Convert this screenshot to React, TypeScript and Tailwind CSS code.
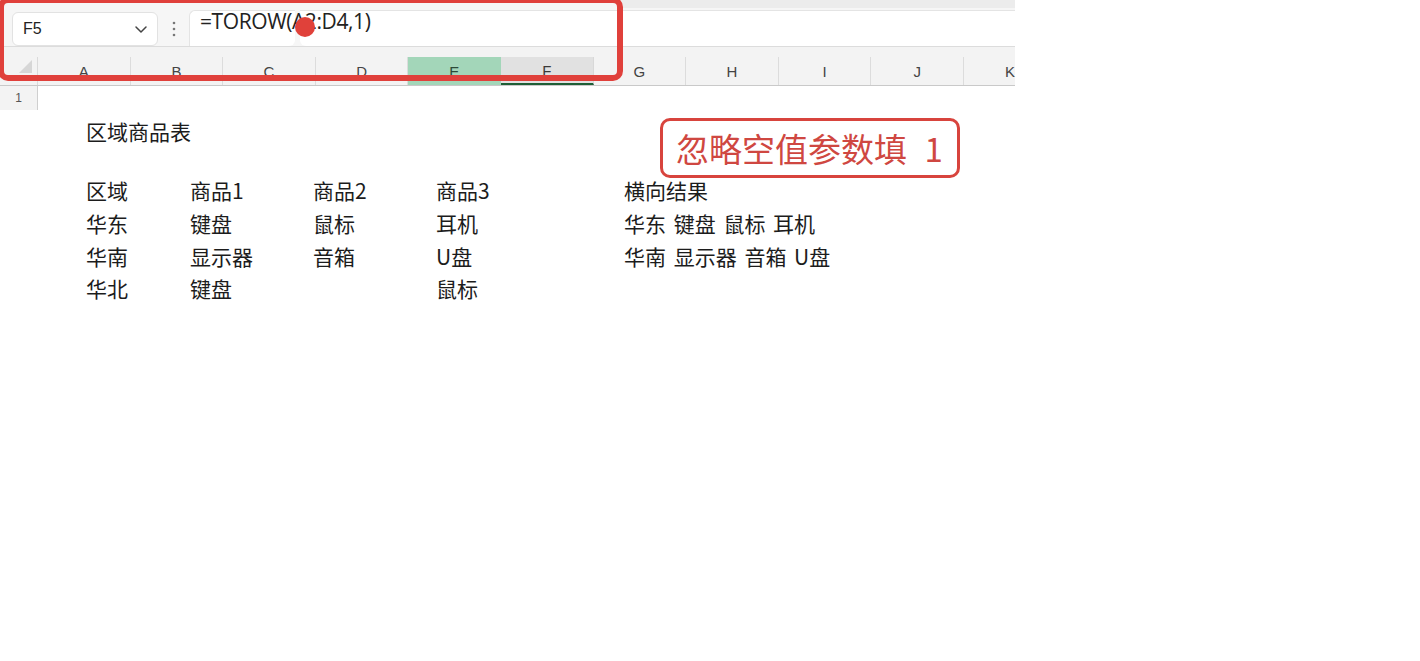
import React from "react";

const COLS = ["A", "B", "C", "D", "E", "F", "G", "H", "I", "J"];

const rows: string[][] = [
  ["区域", "商品1", "商品2", "商品3", "横向结果"],
  ["华东", "键盘", "鼠标", "耳机", "华东 键盘 鼠标 耳机"],
  ["华南", "显示器", "音箱", "U盘", "华南 显示器 音箱 U盘"],
  ["华北", "键盘", "", "鼠标", ""],
];

const rowHeights = ["h-[33px]", "h-[34px]", "h-[32px]", "h-[32px]"];

export default function App() {
  return (
    <div
      className="relative w-[1420px] h-[661px] bg-white overflow-hidden text-[#1c1c1c]"
      style={{ fontFamily: '"Noto Sans CJK SC", "Noto Sans", sans-serif' }}
    >
      <div className="w-[1015px] flex flex-col">
        {/* Toolbar / formula bar */}
        <div className="relative h-[47px] bg-[#f6f6f6] border-b border-[#dcdcdc] flex items-start">
          <div className="absolute left-[620px] top-0 right-0 h-[8px] bg-[#ececec]" />
          <div className="absolute left-[900px] top-[10px] right-0 h-px bg-[#cfcfcf]" />
          {/* Name box */}
          <div className="ml-[12px] mt-[12px] w-[146px] h-[34px] bg-white border border-[#e2e2e2] rounded-[6px] flex items-center justify-between pl-[10px] pr-[8px]">
            <span
              className="text-[16px] text-[#222]"
              style={{ fontFamily: '"Liberation Sans", Arial, sans-serif' }}
            >
              F5
            </span>
            <svg width="16" height="16" viewBox="0 0 16 16" fill="none">
              <path d="M3 6l5 5 5-5" stroke="#444" strokeWidth="1.5" strokeLinecap="round" strokeLinejoin="round" />
            </svg>
          </div>
          {/* dots */}
          <div className="w-[31px] h-[47px] flex items-center justify-center pt-[10px]">
            <svg width="4" height="16" viewBox="0 0 4 16">
              <circle cx="2" cy="2" r="1.3" fill="#777" />
              <circle cx="2" cy="8" r="1.3" fill="#777" />
              <circle cx="2" cy="14" r="1.3" fill="#777" />
            </svg>
          </div>
          {/* formula input */}
          <div className="relative flex-1 h-[47px] flex">
            <div className="mt-[10px] w-[106px] h-[36px] bg-white border-l border-t border-[#e4e4e4] rounded-tl-[6px] rounded-br-[6px]" />
            <div className="mt-[10px] ml-[5px] flex-1 h-[36px] bg-white border-t border-[#e4e4e4] rounded-bl-[6px]" />
            <div
              className="absolute left-[11px] top-[7px] text-[21px] leading-[28px] text-[#222] tracking-[-0.4px]"
              style={{ fontFamily: '"Open Sans", "Noto Sans", sans-serif' }}
            >
              =TOROW(A2:D4,1)
            </div>
            <div className="absolute left-[106px] top-[17px] w-[20px] h-[20px] rounded-full bg-[#e0413a]" />
          </div>
        </div>

        {/* Column header row */}
        <div className="h-[39px] bg-[#f3f3f3] border-b border-[#c9c9c9] flex items-end">
          <div className="w-[38px] h-[28px] relative border-r border-[#dadada]">
            <svg className="absolute left-[19px] top-[3px]" width="13" height="13" viewBox="0 0 13 13">
              <path d="M13 0L13 13L0 13Z" fill="#d6d6d6" />
            </svg>
          </div>
          {COLS.map((c) => (
            <div
              key={c}
              className={
                "w-[92.6px] h-[28px] flex items-center justify-center pt-[2px] text-[15px] border-r " +
                (c === "E"
                  ? "bg-[#a3d6b9] text-[#2c4a38] border-[#a3d6b9]"
                  : c === "F"
                  ? "bg-[#e1e1e1] text-[#3a3a3a] border-b-2 border-b-[#1e5e36] border-r-[#d8d8d8]"
                  : "text-[#444] border-[#dcdcdc]")
              }
              style={{ fontFamily: '"Liberation Sans", Arial, sans-serif' }}
            >
              {c}
            </div>
          ))}
          <div
            className="flex-1 h-[28px] flex items-center justify-end pt-[2px] text-[15px] text-[#444]"
            style={{ fontFamily: '"Liberation Sans", Arial, sans-serif' }}
          >
            K
          </div>
        </div>

        {/* Row 1 */}
        <div className="h-[24px] flex">
          <div
            className="w-[38px] h-[24px] bg-[#f3f3f3] border-r border-[#cfcfcf] flex items-center justify-center text-[12px] text-[#555]"
            style={{ fontFamily: '"Liberation Sans", Arial, sans-serif' }}
          >
            1
          </div>
        </div>
      </div>

      {/* Red highlight frame around formula bar */}
      <div className="absolute left-[-2px] top-[-3px] w-[625px] h-[84px] border-[6px] border-[#e0403b] rounded-[10px]" />

      {/* Body content */}
      <div className="pl-[86px] pt-[7px]">
        <div className="h-[28px] text-[21px] leading-[28px]">区域商品表</div>
        <div className="mt-[28px] flex flex-col">
          {rows.map((r, i) => (
            <div key={i} className={"flex items-center text-[21px] leading-[28px] " + rowHeights[i]}>
              <div className="w-[104px]">{r[0]}</div>
              <div className="w-[123px]">{r[1]}</div>
              <div className="w-[123px]">{r[2]}</div>
              <div className="w-[188px]">{r[3]}</div>
              <div className="whitespace-pre [word-spacing:3px]">{r[4]}</div>
            </div>
          ))}
        </div>
      </div>

      {/* Annotation */}
      <div className="absolute left-[660px] top-[118px] w-[300px] h-[60px] border-[3px] border-[#d8443d] rounded-[10px] flex items-center pl-[13px]">
        <span className="text-[33px] leading-[40px] text-[#cf4741] whitespace-pre [word-spacing:10px]">忽略空值参数填 1</span>
      </div>
    </div>
  );
}
